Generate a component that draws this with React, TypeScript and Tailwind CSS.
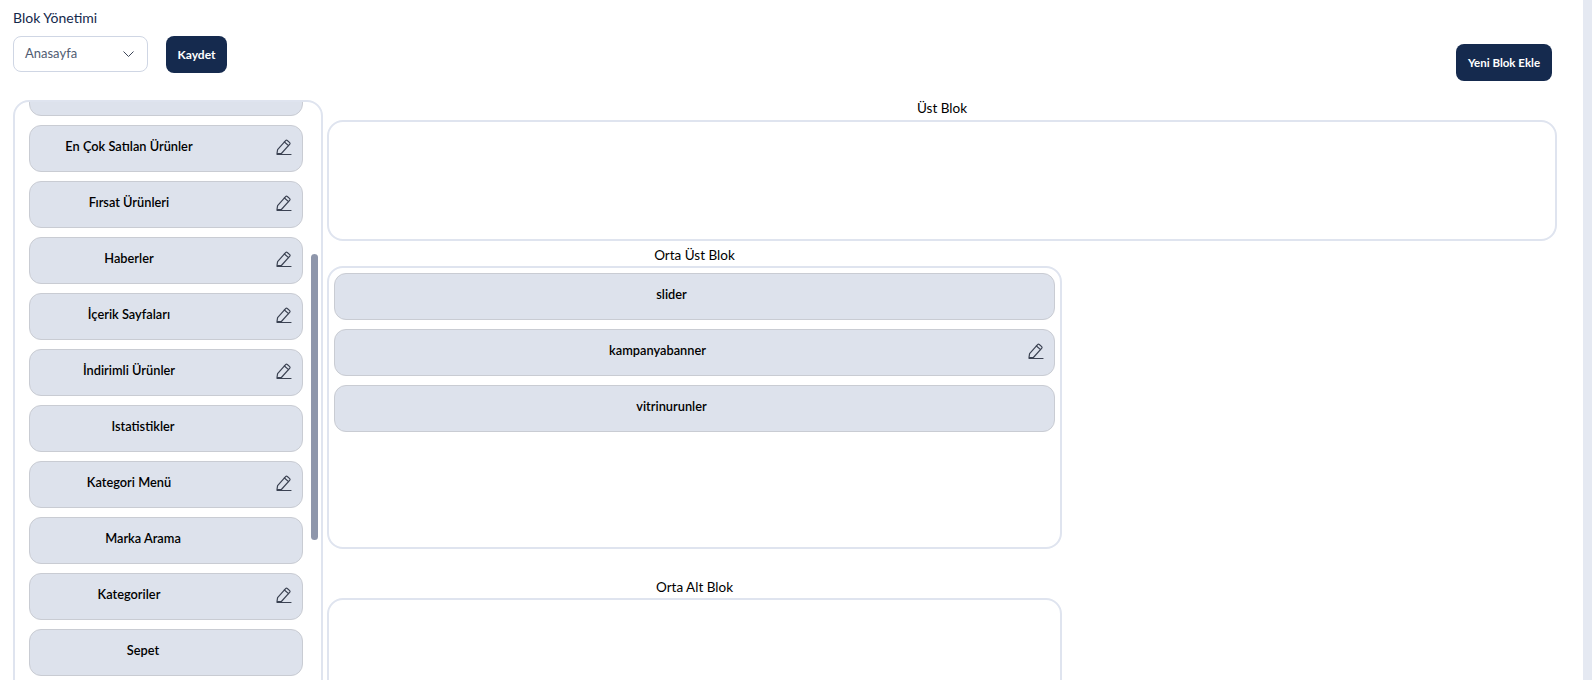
const leftBlocks = [
  { name: '', edit: false },
  { name: 'En Çok Satılan Ürünler', edit: true },
  { name: 'Fırsat Ürünleri', edit: true },
  { name: 'Haberler', edit: true },
  { name: 'İçerik Sayfaları', edit: true },
  { name: 'İndirimli Ürünler', edit: true },
  { name: 'Istatistikler', edit: false },
  { name: 'Kategori Menü', edit: true },
  { name: 'Marka Arama', edit: false },
  { name: 'Kategoriler', edit: true },
  { name: 'Sepet', edit: false },
];

const middleBlocks = [
  { name: 'slider', edit: false },
  { name: 'kampanyabanner', edit: true },
  { name: 'vitrinurunler', edit: false },
];

function EditIcon() {
  return (
    <svg width="18" height="18" viewBox="0 0 18 18" fill="none" stroke="#3b4252" strokeWidth="1.2" strokeLinejoin="round" strokeLinecap="round">
      <path d="M2 15.5 L2.6 11.6 L10.6 2.6 Q11.4 1.9 12.3 2.5 L14.7 4.6 Q15.4 5.4 14.8 6.2 L6.4 15.5 Z" />
      <path d="M9.4 4 L13.6 7.6" />
      <path d="M2 16.5 H16" />
    </svg>
  );
}

function BlockRow({ name, edit }: { name: string; edit: boolean }) {
  return (
    <div className="flex h-[47px] shrink-0 items-center rounded-xl border border-[#c9ccd3] bg-[#dde2ec] pb-[4px]">
      <span className="flex-1 truncate text-center text-[12.8px] font-semibold text-black">{name}</span>
      {edit ? (
        <div className="flex w-[74px] justify-end pr-[9px]">
          <EditIcon />
        </div>
      ) : (
        <div className="w-[46px]" />
      )}
    </div>
  );
}

export default function App() {
  return (
    <div className="flex h-[680px] w-full overflow-hidden bg-white font-['Lato','Noto_Sans',sans-serif]">
      <main className="flex-1 overflow-hidden">
        <div className="flex items-start justify-between pl-[13px] pr-[31px] pt-[9px]">
          <div>
            <h1 className="text-[14px] leading-[17px] text-[#14284b]">Blok Yönetimi</h1>
            <div className="mt-[10px] flex items-start gap-[18px]">
              <div className="flex h-[36px] w-[135px] items-center justify-between rounded-lg border border-[#cfd6e4] pl-[11px] pr-[13px]">
                <span className="text-[13px] text-[#505c72]">Anasayfa</span>
                <svg width="11" height="6" viewBox="0 0 11 6" fill="none" stroke="#3d4658" strokeWidth="1">
                  <path d="M0.5 0.5 L5.5 5.5 L10.5 0.5" />
                </svg>
              </div>
              <button className="h-[37px] w-[61px] rounded-lg bg-[#152a4e] text-[12px] font-bold text-white">Kaydet</button>
            </div>
          </div>
          <button className="mt-[35px] h-[37px] w-[96px] rounded-lg bg-[#152a4e] text-[11.5px] font-bold text-white">Yeni Blok Ekle</button>
        </div>

        <div className="mt-[19px] flex items-start pl-[13px] pr-[26px]">
          <div className="relative h-[620px] w-[310px] shrink-0 overflow-hidden rounded-2xl border-2 border-[#dfe4ef]">
            <div className="-mt-[33px] flex flex-col gap-[9px] pl-[14px] pr-[18px]">
              {leftBlocks.map((block) => (
                <BlockRow key={block.name} name={block.name} edit={block.edit} />
              ))}
            </div>
            <div className="absolute right-[3px] top-[152px] h-[286px] w-[7px] rounded-full bg-[#8e96ab]" />
          </div>

          <div className="ml-[4px] min-w-0 flex-1">
            <div className="text-center text-[13.5px] leading-[17px] text-black">Üst Blok</div>
            <div className="mt-[3px] h-[121px] rounded-2xl border-2 border-[#dfe4ef]" />

            <div className="mt-[6px] w-[735px]">
              <div className="text-center text-[13.5px] leading-[17px] text-black">Orta Üst Blok</div>
              <div className="mt-[2px] flex h-[283px] flex-col gap-[9px] rounded-2xl border-2 border-[#dfe4ef] px-[5px] pt-[5px]">
                {middleBlocks.map((block) => (
                  <BlockRow key={block.name} name={block.name} edit={block.edit} />
                ))}
              </div>

              <div className="mt-[30px] text-center text-[13.5px] leading-[17px] text-black">Orta Alt Blok</div>
              <div className="mt-[2px] h-[200px] rounded-2xl border-2 border-[#dfe4ef]" />
            </div>
          </div>
        </div>
      </main>
      <div className="h-full w-[9px] shrink-0 bg-[#e5e9f2]" />
    </div>
  );
}
